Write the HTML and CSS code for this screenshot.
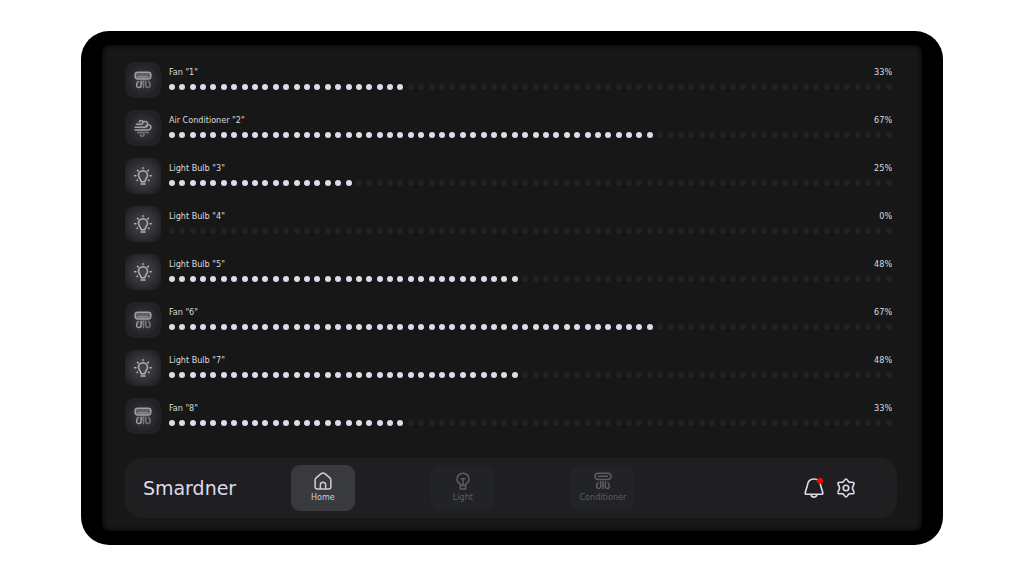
FILE: index.html
```html
<!DOCTYPE html>
<html lang="en">

<head>
  <meta charset="UTF-8">
  <meta name="viewport" content="width=device-width, initial-scale=1.0">
  <title>Smardner</title>
  <link rel="stylesheet" href="styles.css">
</head>

<body>
  <!-- Shared icons -->
  <svg class="sprite" aria-hidden="true">
    <symbol id="icon-fan" viewBox="0 0 24 24">
      <rect x="1.500" y="1.500" width="21" height="9" rx="3.500" fill="currentColor" fill-opacity=".4"/>
      <path d="M5.500 7.500h13" opacity=".6"/>
      <path d="M9.500 13.500v6a3 3 0 1 1-6-1c0-2 .8-3.500 2-4.500"/>
      <path d="M12.500 13.500v8.500M15.500 13.500v6a3 3 0 1 0 6-1c0-2-.8-3.500-2-4.500" opacity=".6"/>
    </symbol>
    <symbol id="icon-unit" viewBox="0 0 24 24">
      <rect x="1.500" y="1.500" width="21" height="8.500" rx="4"/>
      <path d="M6 5.800h12M9 13v6.500a2.700 2.700 0 1 1-5.400-.5c0-2 .6-3.500 1.700-4.500M12 13v9M15 13v6.500a2.700 2.700 0 1 0 5.400-.5c0-2-.6-3.500-1.700-4.500"/>
    </symbol>
    <symbol id="icon-air" viewBox="0 0 24 24">
      <path d="M3 7h6.500a2.500 2.500 0 1 0-2.500-3M1.500 11h13a3.800 3.800 0 1 0-3.800-4.500M1.500 14.500h17.500a3.500 3.500 0 1 0-3-5.300"/>
      <path d="M5 18h6a2.500 2.500 0 1 1-2.500 3M15 18h4" opacity=".6"/>
    </symbol>
    <symbol id="icon-bulb" viewBox="0 0 24 24">
      <path d="M9.500 19.500c0-3.500-3.500-4.500-3.500-8.500a6 6 0 0 1 12 0c0 4-3.500 5-3.500 8.500zM9.500 22.500h5M12 1v1M4.800 4.500l.7.700M19.200 4.500l-.7.700M1 11.500h1.500M21.500 11.500h1.500M4 18l.8-.7M20 18l-.8-.7"/>
    </symbol>
    <symbol id="icon-lamp" viewBox="0 0 24 24">
      <path d="M8.500 18v-2c-2.800-1.500-4.500-3.500-4.500-6.500a8 8 0 0 1 16 0c0 3-1.700 5-4.500 6.500v2zM8.500 18v4.500h7v-4.500M12 18v-9M9.500 9h5"/>
    </symbol>
    <symbol id="icon-home" viewBox="0 0 24 24">
      <path d="M1.500 11c0-1.500.5-2.500 1.700-3.500l6.300-5.300c1.500-1.200 3.500-1.200 5 0l6.300 5.300c1.200 1 1.700 2 1.700 3.500v8.500c0 2-1 3-3 3h-15c-2 0-3-1-3-3zM8.500 22.500v-5.500a3.500 3.500 0 0 1 7 0v5.500"/>
    </symbol>
    <symbol id="icon-bell" viewBox="0 0 24 24">
      <path d="M12 1.200c-5 0-7.500 3.700-8 7.700l-2.400 8.100c-.5 1.800 0 2.500 1.700 2.500h17.400c1.700 0 2.200-.7 1.700-2.500l-2.400-8.100c-.5-4-3-7.700-8-7.700zM8.500 19.500a3.500 3.500 0 0 0 7 0"/>
    </symbol>
    <symbol id="icon-gear" viewBox="0 0 24 24">
      <circle cx="12" cy="12" r="3.300"/>
      <path d="M12 1.200c1.300 0 2.300 2.800 3.500 3.700 1.400.8 5-.5 6 .9.800 1.400-1.800 4.200-1.800 6.200s2.600 4.800 1.800 6.200c-1 1.400-4.600.1-6 .9-1.200.9-2.200 3.700-3.500 3.700s-2.300-2.800-3.500-3.700c-1.400-.8-5 .5-6-.9-.8-1.400 1.800-4.200 1.800-6.200s-2.600-4.800-1.800-6.200c1-1.400 4.600-.1 6-.9 1.200-.9 2.200-3.700 3.500-3.700z"/>
    </symbol>
  </svg>

  <div class="device">
    <div class="screen">
      <ul class="device-list" id="deviceList"></ul>

      <nav class="dock">
        <div class="logo">Smardner</div>
        <div class="tabs">
          <button type="button" class="tab active"><svg><use href="#icon-home"/></svg>Home</button>
          <button type="button" class="tab"><svg><use href="#icon-lamp"/></svg>Light</button>
          <button type="button" class="tab"><svg><use href="#icon-unit"/></svg>Conditioner</button>
        </div>
        <div class="actions">
          <button type="button" class="action" aria-label="Notifications"><svg><use href="#icon-bell"/></svg><span class="badge"></span></button>
          <button type="button" class="action" aria-label="Settings"><svg><use href="#icon-gear"/></svg></button>
        </div>
      </nav>
    </div>
  </div>

  <script src="script.js"></script>
</body>

</html>
```
FILE: styles.css
```css
* {
  box-sizing: border-box;
}

body {
  margin: 0;
  min-height: 100vh;
  display: flex;
  align-items: center;
  justify-content: center;
  background-color: #fff;
  font-family: "DejaVu Sans Condensed", "Liberation Sans", sans-serif;
  font-size: 9px;
  line-height: 12px;
  color: #dcdcdc;
}

button {
  padding: 0;
  border: none;
  font: inherit;
  cursor: pointer;
}

svg {
  fill: none;
  stroke: currentColor;
  stroke-width: 2;
  stroke-linecap: round;
  stroke-linejoin: round;
}

.sprite {
  display: none;
}

.device {
  width: 84.2%;
  padding: 14px 21px;
  border-radius: 28px;
  background-color: #000;
}

.screen {
  padding: 17px 25px 13px 23px;
  border-radius: 8px;
  background-color: #171717;
  box-shadow: inset 0 0 2px 3px #0f0f0f;
}

/* Devices */
.device-list {
  margin: 0 0 24px;
  padding: 0 5px 0 0;
  list-style: none;
  display: grid;
  gap: 12px;
}

.device-row {
  display: flex;
  gap: 8px;
}

.tile {
  width: 36px;
  height: 36px;
  flex: none;
  display: flex;
  align-items: center;
  justify-content: center;
  border-radius: 10px;
  color: #a09fa4;
  background: radial-gradient(circle, #48494c 0%, #2e2f32 35%, #212226 65%);
}

.tile.bulb {
  color: #b5b3bb;
  background: radial-gradient(circle, #46474b 0%, #36373b 40%, #232428 75%);
}

.tile svg {
  width: 18px;
  height: 18px;
}

.info {
  flex: 1;
  padding-top: 4px;
}

.caption {
  display: flex;
  justify-content: space-between;
  margin-bottom: 6px;
}

.dots {
  display: flex;
  justify-content: space-between;
}

.dot {
  width: 6px;
  height: 6px;
  border-radius: 50%;
  background-color: #222226;
}

.dot.on {
  background-color: #dedaea;
}

/* Bottom bar */
.dock {
  display: flex;
  align-items: center;
  height: 60px;
  padding: 0 41px 0 18px;
  border-radius: 18px;
  background-color: #1f1f21;
}

.logo {
  width: 148px;
  font-family: "DejaVu Sans", sans-serif;
  font-size: 19px;
  line-height: 24px;
  color: #dedaea;
}

.tabs {
  display: flex;
  gap: 76px;
}

.tab {
  width: 64px;
  height: 46px;
  padding-bottom: 2px;
  display: flex;
  flex-direction: column;
  align-items: center;
  justify-content: center;
  gap: 1px;
  border-radius: 9px;
  background-color: #222327;
  color: #5d5d62;
}

.tab svg {
  width: 18px;
  height: 18px;
}

.tab.active {
  background-color: #393a3e;
  color: #d0cdda;
}

.actions {
  display: flex;
  gap: 12px;
  margin-left: auto;
}

.action {
  position: relative;
  width: 20px;
  height: 20px;
  background: none;
  color: #dedaea;
}

.action svg {
  display: block;
  width: 20px;
  height: 20px;
}

.badge {
  position: absolute;
  top: 0;
  right: 1px;
  width: 6px;
  height: 6px;
  border-radius: 50%;
  background-color: #f00;
}
```
FILE: script.js
```javascript
const DOTS = 70;

const devices = [
  { name: 'Fan', icon: 'fan', value: 33 },
  { name: 'Air Conditioner', icon: 'air', value: 67 },
  { name: 'Light Bulb', icon: 'bulb', value: 25 },
  { name: 'Light Bulb', icon: 'bulb', value: 0 },
  { name: 'Light Bulb', icon: 'bulb', value: 48 },
  { name: 'Fan', icon: 'fan', value: 67 },
  { name: 'Light Bulb', icon: 'bulb', value: 48 },
  { name: 'Fan', icon: 'fan', value: 33 }
];

const displayDevice = (device, index) => {
  const lit = Math.round(device.value / 100 * DOTS);
  let dots = '';
  for (let i = 0; i < DOTS; i++) {
    dots += `<span class="dot${i < lit ? ' on' : ''}"></span>`;
  }

  const row = document.createElement('li');
  row.classList.add('device-row');
  row.innerHTML = `
    <div class="tile ${device.icon}"><svg><use href="#icon-${device.icon}"/></svg></div>
    <div class="info">
      <div class="caption">
        <span id="device${index}">${device.name} "${index + 1}"</span>
        <span>${device.value}%</span>
      </div>
      <div class="dots" role="progressbar" aria-labelledby="device${index}" aria-valuenow="${device.value}">${dots}</div>
    </div>
  `;

  document.getElementById('deviceList').appendChild(row);
}

devices.forEach(displayDevice);
```
